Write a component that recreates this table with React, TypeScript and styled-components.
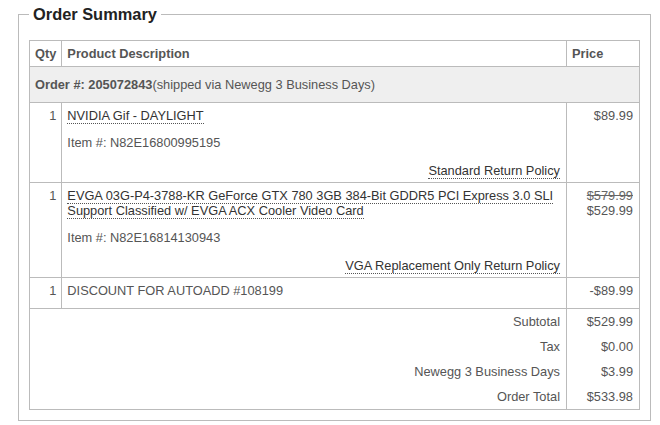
import React from "react";
import styled, { createGlobalStyle } from "styled-components";

const Global = createGlobalStyle`
  html, body { margin: 0; padding: 0; background: #fff; }
  body { font-family: "Liberation Sans", Arial, sans-serif; }
`;

const Page = styled.div`
  padding: 5px 0 0 18px;
`;

const Fieldset = styled.fieldset`
  box-sizing: border-box;
  width: 633px;
  margin: 0;
  padding: 17px 10px 10px 10px;
  border: 1px solid #bbb;
`;

const Legend = styled.legend`
  margin-left: 0;
  padding: 0 4px;
  font-size: 16.4px;
  line-height: 18px;
  font-weight: bold;
  color: #222;
`;

const Table = styled.table`
  width: 100%;
  border-collapse: collapse;
  font-size: 12.8px;
  line-height: 15px;
  color: #555;
`;

const Th = styled.th<{ $align?: string; $w?: number }>`
  border: 1px solid #bbb;
  padding: 5px 5px 5px 5px;
  height: 15px;
  text-align: ${(p) => p.$align || "left"};
  font-weight: bold;
  width: ${(p) => (p.$w ? `${p.$w}px` : "auto")};
  box-sizing: border-box;
`;

const Td = styled.td<{ $align?: string; $pb?: number }>`
  border: 1px solid #bbb;
  padding: 5px 6px ${(p) => p.$pb ?? 4}px 5px;
  vertical-align: top;
  text-align: ${(p) => p.$align || "left"};
`;

const OrderCell = styled.td`
  border: 1px solid #bbb;
  background: #efefef;
  padding: 10px 5px 10px 5px;
`;

const QtyCell = styled(Td)`
  text-align: right;
  padding-right: 5px;
`;

const Link = styled.a`
  color: #333;
  text-decoration: none;
  border-bottom: 1px dotted #555;
`;

const ItemNo = styled.div`
  margin-top: 12px;
`;

const Policy = styled.div`
  margin-top: 13px;
  text-align: right;
`;

const Strike = styled.div`
  text-decoration: line-through;
  color: #666;
`;

const SumLabels = styled.td`
  border: 1px solid #bbb;
  padding: 0 6px 0 5px;
  text-align: right;
  vertical-align: top;
`;

const SumLine = styled.div`
  height: 25px;
  line-height: 25px;
`;

const SumValues = styled(SumLabels)``;

export default function App() {
  return (
    <>
      <Global />
      <Page>
        <Fieldset>
          <Legend>Order Summary</Legend>
          <Table>
            <thead>
              <tr>
                <Th $w={32}>Qty</Th>
                <Th>Product Description</Th>
                <Th $w={73}>Price</Th>
              </tr>
            </thead>
            <tbody>
              <tr>
                <OrderCell colSpan={3}>
                  <b>Order #: 205072843</b>(shipped via Newegg 3 Business Days)
                </OrderCell>
              </tr>
              <tr>
                <QtyCell>1</QtyCell>
                <Td>
                  <Link>NVIDIA Gif - DAYLIGHT</Link>
                  <ItemNo>Item #: N82E16800995195</ItemNo>
                  <Policy>
                    <Link>Standard Return Policy</Link>
                  </Policy>
                </Td>
                <Td $align="right">$89.99</Td>
              </tr>
              <tr>
                <QtyCell>1</QtyCell>
                <Td>
                  <Link>
                    EVGA 03G-P4-3788-KR GeForce GTX 780 3GB 384-Bit GDDR5 PCI Express 3.0 SLI
                    Support Classified w/ EVGA ACX Cooler Video Card
                  </Link>
                  <ItemNo>Item #: N82E16814130943</ItemNo>
                  <Policy>
                    <Link>VGA Replacement Only Return Policy</Link>
                  </Policy>
                </Td>
                <Td $align="right">
                  <Strike>$579.99</Strike>
                  <div>$529.99</div>
                </Td>
              </tr>
              <tr>
                <QtyCell $pb={10}>1</QtyCell>
                <Td $pb={10}>DISCOUNT FOR AUTOADD #108199</Td>
                <Td $pb={10} $align="right">-$89.99</Td>
              </tr>
              <tr>
                <SumLabels colSpan={2}>
                  <SumLine>Subtotal</SumLine>
                  <SumLine>Tax</SumLine>
                  <SumLine>Newegg 3 Business Days</SumLine>
                  <SumLine>Order Total</SumLine>
                </SumLabels>
                <SumValues>
                  <SumLine>$529.99</SumLine>
                  <SumLine>$0.00</SumLine>
                  <SumLine>$3.99</SumLine>
                  <SumLine>$533.98</SumLine>
                </SumValues>
              </tr>
            </tbody>
          </Table>
        </Fieldset>
      </Page>
    </>
  );
}
